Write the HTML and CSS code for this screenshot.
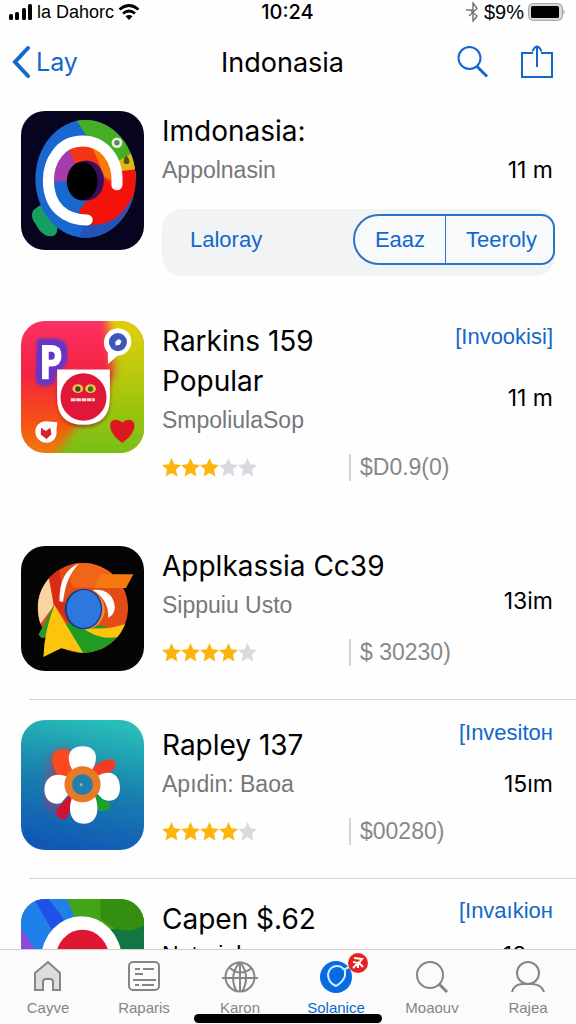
FILE: index.html
```html
<!DOCTYPE html>
<html lang="en">
<head>
    <meta charset="UTF-8">
    <meta name="viewport" content="width=device-width, initial-scale=1.0">
    <title>Indonasia</title>
    <link rel="stylesheet" href="styles.css">
</head>
<body>
    <svg class="sprite" aria-hidden="true">
        <symbol id="star" viewBox="0 0 20 20">
            <path d="M10 0l2.900 6.600 7.100.7-5.300 4.900 1.500 7.200L10 15.700l-6.200 3.700 1.500-7.200L0 7.300l7.100-.7z"/>
        </symbol>
    </svg>

    <div class="status-bar">
        <div class="status-left">
            <svg width="24" height="16" viewBox="0 0 24 16">
                <rect x="0" y="10" width="4" height="6" rx="1.5"/>
                <rect x="6" y="8" width="4" height="8" rx="1.5"/>
                <rect x="13" y="4" width="4" height="12" rx="1.5"/>
                <rect x="19" y="0" width="4" height="16" rx="1.5"/>
            </svg>
            <span class="carrier">la Dahorc</span>
            <svg width="22" height="16" viewBox="0 0 22 16">
                <path d="M1.5 5.5Q11-2.5 20.5 5.5M5 9.5q6-5 12 0" fill="none" stroke="#000" stroke-width="2.8"/>
                <path d="M7.500 12.200q3.500-2.600 7 0L11 16z"/>
            </svg>
        </div>
        <div class="clock">10:24</div>
        <div class="status-right">
            <svg width="14" height="20" viewBox="0 0 14 20" fill="none" stroke="#777" stroke-width="1.500">
                <path d="M0 8h7M3 14l8-7.500L7 1v18l4-5-6-5"/>
            </svg>
            <span>$9%</span>
            <svg width="38" height="18" viewBox="0 0 38 18">
                <rect x=".7" y=".7" width="33.600" height="16.600" rx="4" fill="#ddd" stroke="#999"/>
                <rect x="3" y="3" width="28" height="12" rx="1.500"/>
                <path d="M35.500 6q2 3 0 6z" fill="#888"/>
            </svg>
        </div>
    </div>

    <header class="nav">
        <a class="back" href="#">
            <svg width="20" height="34" viewBox="0 0 20 34" fill="none" stroke="currentColor" stroke-width="4" stroke-linecap="round">
                <path d="M16 3L3 17l13 14"/>
            </svg>
            Lay
        </a>
        <h1>Indonasia</h1>
        <div class="nav-actions">
            <button aria-label="Search">
                <svg width="32" height="34" viewBox="0 0 32 34" fill="none" stroke="currentColor" stroke-width="2">
                    <circle cx="12.500" cy="13" r="11"/>
                    <path d="M20 21.500l10 10" stroke-width="3"/>
                </svg>
            </button>
            <button aria-label="Share">
                <svg width="32" height="34" viewBox="0 0 32 34" fill="none" stroke="currentColor" stroke-width="2">
                    <path d="M12 8H1v24h30V8H20M16 22V2M11.500 6.500Q13 2 16 1.500q3 .5 4.500 5"/>
                </svg>
            </button>
        </div>
    </header>

    <main class="list">
        <article class="app featured">
            <svg class="icon icon-ring" viewBox="32 32 368 416" preserveAspectRatio="none">
                <defs>
                    <clipPath id="blob"><ellipse cx="225" cy="235" rx="150" ry="176"/></clipPath>
                </defs>
                <rect x="32" y="32" width="368" height="416" fill="#07041f"/>
                <path d="M68 330q30-28 58-20l32 66-18 8q2 28-28 22-22-6-34-32-20-24-10-44z" fill="#16a060"/>
                <g clip-path="url(#blob)">
                    <rect x="60" y="50" width="330" height="370" fill="#1968cf"/>
                    <path d="M185 40l65 100 90 90 50-20V50z" fill="#45ae22"/>
                    <path d="M318 185l60-35v80l-60 5z" fill="#e4b412"/>
                    <path d="M300 215l85-10v120l-75 50-80 5-25-50 50-60z" fill="#f31308"/>
                    <path d="M220 370q100 20 150-90v150H200z" fill="#2453b8"/>
                    <path d="M125 245q0-80 60-100l30 50-35 45z" fill="#a73bad"/>
                    <path d="M175 145q75-40 110 30l20 80-50-45-60-20z" fill="#f33514"/>
                    <path d="M245 140q60 20 60 100l-22-10z" fill="#fa7a08"/>
                </g>
                <ellipse cx="228" cy="240" rx="52" ry="60" fill="#39105e"/>
                <ellipse cx="215" cy="242" rx="46" ry="58" fill="#000"/>
                <path d="M319 253C325 170 275 122 215 122C150 122 114 180 114 240C114 320 165 358 230 358" fill="none" stroke="#fff" stroke-width="33" stroke-linecap="round"/>
                <circle cx="319" cy="127" r="12" fill="#698064" stroke="#e5f5dc" stroke-width="8"/>
                <path d="M348 166q8 8 9 20-9 10-18 0 0-15 9-20z" fill="#4c5420"/>
            </svg>
            <div class="body">
                <div class="row">
                    <div>
                        <h2>Imdonasia:</h2>
                        <p class="sub">Appolnasin</p>
                    </div>
                    <div class="side"><span class="time">11 m</span></div>
                </div>
                <div class="filter">
                    <button class="filter-label">Laloray</button>
                    <div class="segment">
                        <button>Eaaz</button>
                        <button>Teeroly</button>
                    </div>
                </div>
            </div>
        </article>

        <article class="app popular">
            <svg class="icon icon-face" viewBox="32 34 368 394" preserveAspectRatio="none">
                <defs>
                    <linearGradient id="warm" x1="0" y1="0" x2="0" y2="1">
                        <stop offset="0" stop-color="#fb3162"/>
                        <stop offset=".4" stop-color="#f32242"/>
                        <stop offset=".8" stop-color="#f65710"/>
                        <stop offset="1" stop-color="#ee7b10"/>
                    </linearGradient>
                    <linearGradient id="lime" x1="0" y1="0" x2="0" y2="1">
                        <stop offset="0" stop-color="#edd104"/>
                        <stop offset="1" stop-color="#6fbd16"/>
                    </linearGradient>
                    <filter id="soft"><feGaussianBlur stdDeviation="14"/></filter>
                    <filter id="glow"><feGaussianBlur stdDeviation="5"/></filter>
                </defs>
                <rect x="32" y="34" width="368" height="394" fill="url(#warm)"/>
                <path d="M288 0h150v460H120l60-90 90-110 40-70z" fill="url(#lime)" filter="url(#soft)"/>
                <path d="M88 95h50q30 5 25 50-8 30-35 38l-5 30q-30 15-40-5z" fill="#6635c8" stroke="#6635c8" stroke-width="18" stroke-linejoin="round" filter="url(#glow)"/>
                <path d="M105 208v-92h18q20 0 20 22t-20 22h-18" fill="none" stroke="#fff" stroke-width="20"/>
                <path d="M140 184h160v80q0 88-80 88t-80-88z" fill="#7b1d18" opacity=".5" filter="url(#glow)"/>
                <path d="M140 179h158v85q0 80-79 80t-79-80z" fill="#fff"/>
                <ellipse cx="219" cy="261" rx="69" ry="71" fill="#df1739"/>
                <ellipse cx="202" cy="236" rx="16" ry="13" fill="#e8c64b"/>
                <ellipse cx="240" cy="236" rx="16" ry="13" fill="#e8c64b"/>
                <circle cx="202" cy="237" r="8" fill="#3e4a23"/>
                <circle cx="240" cy="237" r="8" fill="#397125"/>
                <path d="M181 269h72" stroke="#ffd9dc" stroke-width="9" stroke-dasharray="14 2"/>
                <path d="M321 56c55 0 55 78 0 82l-29 24v-33c-26-30-5-73 29-73z" fill="#fff"/>
                <circle cx="322" cy="97" r="27" fill="#3e57bd"/>
                <path d="M314 96l10-8 9 6-5 11-13 2z" fill="#fff"/>
                <path d="M107 333l34 3-3 22c8 52-63 51-63 6 0-18 14-31 32-31z" fill="#fff"/>
                <path d="M92 353l14 9 14-9 3 20-15 13-17-13z" fill="#d82030"/>
                <path d="M335 398c-60-42-35-88 0-61 36-27 60 20 0 61z" fill="#df1720"/>
            </svg>
            <div class="body">
                <div class="row">
                    <div>
                        <h2>Rarkins 159<br>Popular</h2>
                        <p class="sub">SmpoliulaSop</p>
                    </div>
                    <div class="side">
                        <a class="link" href="#">[Invookisi]</a>
                        <span class="time">11 m</span>
                    </div>
                </div>
                <div class="rating">
                    <div class="stars" role="img" aria-label="3 out of 5">
                        <svg class="on"><use href="#star"/></svg><svg class="on"><use href="#star"/></svg><svg class="on"><use href="#star"/></svg><svg><use href="#star"/></svg><svg><use href="#star"/></svg>
                    </div>
                    <span class="price">$D0.9(0)</span>
                </div>
            </div>
        </article>

        <article class="app chrome">
            <svg class="icon icon-chrome" viewBox="32 30 368 375" preserveAspectRatio="none">
                <defs>
                    <clipPath id="disc"><circle cx="217" cy="216" r="135"/></clipPath>
                </defs>
                <rect x="32" y="30" width="368" height="375" fill="#050505"/>
                <g clip-path="url(#disc)">
                    <rect x="70" y="70" width="300" height="300" fill="#e34c17"/>
                    <path d="M200 70h110v85H190q-25-30 10-85z" fill="#f0651a"/>
                    <path d="M80 150l38-30 12 90-45 60z" fill="#fbd3a0"/>
                    <path d="M115 125l30-30 30 170-45-60z" fill="#d92b14"/>
                    <path d="M150 260l125 10 80 20-60 80H210z" fill="#219b22"/>
                    <path d="M215 275q80 10 140-15v35q-70 25-125-10z" fill="#fcc40d"/>
                </g>
                <path d="M130 207L85 295q3 12 17 11l30-25z" fill="#319527"/>
                <path d="M132 207l86 144-66-14-53 26q2-75 33-156z" fill="#fdc40d"/>
                <path d="M205 83q-40 40-47 115l-11-2q-2-90 58-113z" fill="#fff"/>
                <path d="M270 115h98l-22 41h-96z" fill="#f67a10"/>
                <path d="M246 162q60-5 67 52-3 25-20 31 2-54-47-83z" fill="#fff"/>
                <path d="M250 170q36 20 32 62-10 38-44 48z" fill="#f08c3d"/>
                <ellipse cx="219" cy="219" rx="56" ry="61" fill="#113b83"/>
                <ellipse cx="220" cy="219" rx="51" ry="57" fill="#2e77df"/>
            </svg>
            <div class="body">
                <div class="row">
                    <div>
                        <h2>Applkassia Cc39</h2>
                        <p class="sub">Sippuiu Usto</p>
                    </div>
                    <div class="side"><span class="time">13im</span></div>
                </div>
                <div class="rating">
                    <div class="stars" role="img" aria-label="4 out of 5">
                        <svg class="on"><use href="#star"/></svg><svg class="on"><use href="#star"/></svg><svg class="on"><use href="#star"/></svg><svg class="on"><use href="#star"/></svg><svg><use href="#star"/></svg>
                    </div>
                    <span class="price">$ 30230)</span>
                </div>
            </div>
        </article>

        <article class="app divided">
            <svg class="icon icon-flower" viewBox="32 28 368 390" preserveAspectRatio="none">
                <defs>
                    <linearGradient id="sea" x1=".6" y1="0" x2=".4" y2="1">
                        <stop offset="0" stop-color="#28bdb8"/>
                        <stop offset=".5" stop-color="#187fae"/>
                        <stop offset="1" stop-color="#1157b6"/>
                    </linearGradient>
                </defs>
                <rect x="32" y="28" width="368" height="390" fill="url(#sea)"/>
                <path d="M120 130l60-25-10 90-30 120-40-40z" fill="#c52d58" opacity=".55" filter="url(#soft)"/>
                <path d="M178 120q-35-12-50 10-10 30 17 67l60 10z" fill="#fb4a20"/>
                <path d="M240 180q30-38 68-34 15 17-5 36l-45 20z" fill="#f03c22"/>
                <path d="M180 250l-42 47q-5 30 28 29l30-60z" fill="#cf1432"/>
                <path d="M250 250l50 28q0 28-35 22l-30-30z" fill="#1ca02c"/>
                <path d="M190 185c-28-42-16-78 26-78s53 36 24 78z" fill="#fff"/>
                <path d="M186 258c-18 45-2 81 34 81s50-36 34-81z" fill="#fff"/>
                <path d="M175 200c-40-20-73 0-73 35s25 50 50 42l30-35z" fill="#fff"/>
                <path d="M255 200c40-27 73-12 73 33 0 35-28 45-52 32l-20-20z" fill="#fff"/>
                <circle cx="216" cy="221" r="54" fill="#e87925"/>
                <circle cx="216" cy="222" r="31" fill="#217ead"/>
                <circle cx="212" cy="222" r="4" fill="#8cbfce"/>
            </svg>
            <div class="body">
                <div class="row">
                    <div>
                        <h2>Rapley 137</h2>
                        <p class="sub">Apıdin: Baoa</p>
                    </div>
                    <div class="side">
                        <a class="link" href="#">[Invesitoн</a>
                        <span class="time">15ım</span>
                    </div>
                </div>
                <div class="rating">
                    <div class="stars" role="img" aria-label="4 out of 5">
                        <svg class="on"><use href="#star"/></svg><svg class="on"><use href="#star"/></svg><svg class="on"><use href="#star"/></svg><svg class="on"><use href="#star"/></svg><svg><use href="#star"/></svg>
                    </div>
                    <span class="price">$00280)</span>
                </div>
            </div>
        </article>

        <article class="app divided compact">
            <svg class="icon icon-flower" viewBox="62 41 368 390" preserveAspectRatio="none">
                <rect x="62" y="41" width="368" height="390" fill="#42a518"/>
                <path d="M280 130q80 15 150-40v340H280z" fill="#137544"/>
                <path d="M300 40h130v80q-60 40-130-20z" fill="#338e12"/>
                <path d="M62 41h138l40 100-100 290H62z" fill="#2080ea"/>
                <path d="M100 41h45l45 60-25 50z" fill="#224fe8"/>
                <path d="M62 130l55 80-30 221H62z" fill="#8c4bda"/>
                <ellipse cx="243" cy="220" rx="120" ry="127" fill="#fff"/>
                <ellipse cx="246" cy="220" rx="80" ry="87" fill="#df1733"/>
            </svg>
            <div class="body">
                <div class="row">
                    <div>
                        <h2>Capen $.62</h2>
                        <p class="sub">Natariel</p>
                    </div>
                    <div class="side">
                        <a class="link" href="#">[Invaıkioн</a>
                        <span class="time">18 m</span>
                    </div>
                </div>
            </div>
        </article>
    </main>

    <nav class="tabs">
        <a class="tab" href="#">
            <svg width="28" height="32" viewBox="0 0 28 32" fill="#ddd" stroke="#858585" stroke-width="2">
                <path d="M1 30V13L14 2l12 11v17h-7v-8q0-3-3-3h-4q-3 0-3 3v8z"/>
            </svg>
            Cayve
        </a>
        <a class="tab" href="#">
            <svg width="34" height="32" viewBox="0 0 34 32" fill="none" stroke="#858585" stroke-width="2">
                <rect x="2" y="2" width="30" height="28" rx="4"/>
                <path d="M8 9h5M16 9h11M8 14h8M6 20h23M8 25h4M15 25h12"/>
            </svg>
            Raparis
        </a>
        <a class="tab" href="#">
            <svg width="36" height="34" viewBox="0 0 36 34" fill="none" stroke="#858585" stroke-width="2">
                <circle cx="18" cy="17" r="14.500"/>
                <path d="M0 18h36M18 2v30M18 2q-12 14-3 30M18 2q11 14 2 30M8 8q10 9 22 0"/>
            </svg>
            Karon
        </a>
        <a class="tab active" href="#">
            <span class="tab-icon">
                <svg width="34" height="34" viewBox="0 0 34 34">
                    <circle cx="17" cy="17" r="16" fill="#0869e4"/>
                    <path d="M32 6l-6 3v7q-2 6-9 10-8-3-8-12 2-8 9-8 5 0 7 4" fill="none" stroke="#d5efff" stroke-width="2"/>
                </svg>
                <svg class="badge" width="20" height="20" viewBox="0 0 20 20">
                    <circle cx="10" cy="10" r="10" fill="#e4221f"/>
                    <path d="M6 5l8 1-3 4 4 4M11 9l-6 6M5 9l5 1v5" fill="none" stroke="#fff" stroke-width="2"/>
                </svg>
            </span>
            Solanice
        </a>
        <a class="tab" href="#">
            <svg width="34" height="34" viewBox="0 0 34 34" fill="none" stroke="#858585" stroke-width="2">
                <circle cx="15" cy="15" r="13"/>
                <path d="M24 24l8 8" stroke-width="3"/>
            </svg>
            Moaouv
        </a>
        <a class="tab" href="#">
            <svg width="36" height="34" viewBox="0 0 36 34" fill="none" stroke="#858585" stroke-width="2">
                <circle cx="18" cy="13" r="11"/>
                <path d="M2 32q2-8 11-8h10q9 1 11 8"/>
            </svg>
            Rajea
        </a>
        <div class="home-indicator"></div>
    </nav>
</body>
</html>
```
FILE: styles.css
```css
* {
    margin: 0;
    padding: 0;
    box-sizing: border-box;
}

body {
    font-family: Inter, "Liberation Sans", sans-serif;
    background: #fefefe;
    color: #000;
    height: 100vh;
    display: flex;
    flex-direction: column;
}

a {
    color: #1268cc;
    text-decoration: none;
}

button {
    background: none;
    border: none;
    color: #1268cc;
    font: inherit;
    cursor: pointer;
}

svg {
    display: block;
    flex: none;
}

.sprite {
    position: absolute;
    width: 0;
    height: 0;
}

/* status bar */
.status-bar {
    display: grid;
    grid-template-columns: 1fr auto 1fr;
    align-items: center;
    height: 22px;
    padding: 0 10px 0 9px;
    font-family: "Liberation Sans", sans-serif;
    font-size: 18px;
}

.status-left,
.status-right {
    display: flex;
    align-items: center;
    gap: 4px;
}

.status-right {
    justify-content: flex-end;
    font-size: 20px;
}

.clock {
    font-family: Inter, sans-serif;
    font-size: 20px;
    font-weight: 500;
}

/* navigation */
.nav {
    display: grid;
    grid-template-columns: 1fr auto 1fr;
    align-items: center;
    height: 80px;
    padding: 0 23px 0 12px;
}

.back {
    display: flex;
    align-items: center;
    gap: 4px;
    font-size: 25px;
}

.nav h1 {
    font-size: 27px;
    font-weight: 400;
}

.nav-actions {
    display: flex;
    justify-content: flex-end;
    gap: 32px;
}

/* list */
.list {
    flex: 1;
    min-height: 0;
    overflow-y: auto;
    scrollbar-width: none;
    padding-top: 9px;
}

.app {
    display: flex;
    gap: 18px;
    padding: 0 21px;
}

.featured {
    margin-bottom: 45px;
}

.popular {
    margin-bottom: 65px;
}

.chrome {
    margin-bottom: 28px;
}

.divided {
    position: relative;
    padding-top: 21px;
    margin-bottom: 28px;
}

.divided::before {
    content: "";
    position: absolute;
    top: 0;
    left: 29px;
    right: 0;
    border-top: 1px solid #d4d4d6;
}

.icon {
    width: 123px;
    border-radius: 24px;
}

.icon-ring {
    height: 139px;
}

.icon-face {
    height: 132px;
}

.icon-chrome {
    height: 125px;
}

.icon-flower {
    height: 130px;
}

.body {
    flex: 1;
    min-width: 0;
}

.row {
    display: flex;
    justify-content: space-between;
}

.app h2 {
    font-size: 28px;
    font-weight: 400;
    line-height: 40px;
}

.sub {
    font-family: "Liberation Sans", sans-serif;
    font-size: 23px;
    line-height: 38px;
    color: #77777a;
}

.divided .body {
    padding-top: 5px;
}

.side {
    display: flex;
    flex-direction: column;
    align-items: flex-end;
    justify-content: flex-end;
    padding-right: 2px;
}

.link {
    font-family: "Liberation Sans", sans-serif;
    font-size: 22px;
    line-height: 32px;
    margin-bottom: auto;
}

.divided .link {
    margin-top: -8px;
}

.time {
    font-size: 23px;
    line-height: 38px;
}

.popular .time {
    margin-bottom: 22px;
}

.chrome .time {
    margin-bottom: 4px;
}

.compact .body {
    padding-top: 0;
}

.compact .link {
    margin-top: -4px;
}

.compact .sub,
.compact .time {
    line-height: 32px;
    color: #000;
}

.filter {
    display: flex;
    justify-content: space-between;
    align-items: flex-start;
    height: 67px;
    margin-top: 20px;
    padding: 5px 0 0 28px;
    border-radius: 20px;
    background: #f2f3f5;
    font-family: "Liberation Sans", sans-serif;
    font-size: 22px;
}

.filter-label,
.segment {
    height: 51px;
}

.segment {
    display: flex;
    border: 2px solid #2874c8;
    border-radius: 26px 14px 14px 26px;
    background: #f7f9fb;
}

.segment button {
    padding: 0 20px;
}

.segment button + button {
    border-left: 1px solid #2874c8;
    padding: 0 16px 0 20px;
}

.rating {
    display: flex;
    align-items: center;
    margin-top: 15px;
}

.stars {
    display: flex;
    width: 187px;
}

.stars svg {
    width: 19px;
    height: 19px;
    fill: #d9dadf;
}

.stars .on {
    fill: #fbb50c;
}

.price {
    padding-left: 9px;
    border-left: 2px solid #d3d3d6;
    font-family: "Liberation Sans", sans-serif;
    font-size: 23px;
    line-height: 27px;
    color: #88888b;
}

/* bottom tabs */
.tabs {
    position: relative;
    display: flex;
    height: 75px;
    border-top: 1px solid #cfcfd1;
    background: #fbfbfb;
}

.tab {
    flex: 1;
    display: flex;
    flex-direction: column;
    align-items: center;
    justify-content: space-between;
    padding: 10px 0 7px;
    font-family: "Liberation Sans", sans-serif;
    font-size: 15px;
    line-height: 18px;
    color: #858585;
}

.tab.active {
    color: #0869d0;
}

.tab-icon {
    position: relative;
}

.badge {
    position: absolute;
    top: -7px;
    right: -15px;
}

.home-indicator {
    position: absolute;
    left: 50%;
    bottom: 1px;
    width: 188px;
    height: 9px;
    border-radius: 5px;
    background: #000;
    transform: translateX(-50%);
}
```
